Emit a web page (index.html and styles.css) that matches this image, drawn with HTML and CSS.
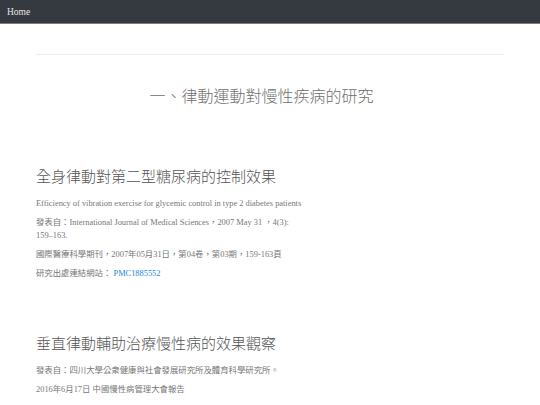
FILE: index.html
```html
<!DOCTYPE html>
<html lang="zh-Hant">
<head>
<meta charset="utf-8">
<title>律動運動</title>
<link rel="stylesheet" href="styles.css">
</head>
<body>
<nav class="navbar"><a class="brand" href="#">Home</a></nav>
<main class="container">
  <hr class="rule">
  <h1 class="page-title">一、律動運動對慢性疾病的研究</h1>
  <section class="study">
    <h2 class="study-title">全身律動對第二型糖尿病的控制效果</h2>
    <div class="study-body">
      <p>Efficiency of vibration exercise for glycemic control in type 2 diabetes patients</p>
      <p>發表自：International Journal of Medical Sciences，2007 May 31 ，4(3):<br>159–163.</p>
      <p>國際醫療科學期刊，2007年05月31日，第04卷，第03期，159-163頁</p>
      <p>研究出處連結網站： <a class="link" href="#">PMC1885552</a></p>
    </div>
  </section>
  <section class="study second">
    <h2 class="study-title">垂直律動輔助治療慢性病的效果觀察</h2>
    <div class="study-body">
      <p>發表自：四川大學公衆健康與社會發展研究所及體育科學研究所。</p>
      <p>2016年6月17日 中國慢性病管理大會報告</p>
    </div>
  </section>
</main>
</body>
</html>
```
FILE: styles.css
```css
html, body {
  margin: 0;
  padding: 0;
  background: #fff;
}
body {
  font-family: "Liberation Serif", "Noto Sans CJK TC", serif;
}
.navbar {
  height: 23px;
  background: #343a40;
  border-bottom: 1px solid #7a7e83;
  display: flex;
  align-items: center;
  padding: 0 7px;
}
.brand {
  color: #e6e6e6;
  text-decoration: none;
  font-size: 9.5px;
  font-family: "Liberation Serif", serif;
}
.container {
  padding: 0 36px;
}
.rule {
  margin: 30px 0 0;
  border: 0;
  border-top: 1px solid #eeeeee;
}
.page-title {
  margin: 28px 0 0;
  padding-right: 17px;
  text-align: center;
  font-family: "Noto Sans CJK TC", sans-serif;
  font-weight: 300;
  font-size: 16px;
  line-height: 24px;
  color: #707070;
}
.study {
  margin-top: 58px;
}
.study.second {
  margin-top: 52px;
}
.study-title {
  margin: 0;
  font-family: "Noto Sans CJK TC", sans-serif;
  font-weight: 300;
  font-size: 15px;
  line-height: 22px;
  color: #555;
}
.study-body {
  margin-top: 10px;
  display: flex;
  flex-direction: column;
  gap: 6px;
}
.study-body p {
  margin: 0;
  font-size: 8.4px;
  line-height: 13px;
  color: #777;
}
.link {
  color: #1e88d4;
  text-decoration: none;
}
```
